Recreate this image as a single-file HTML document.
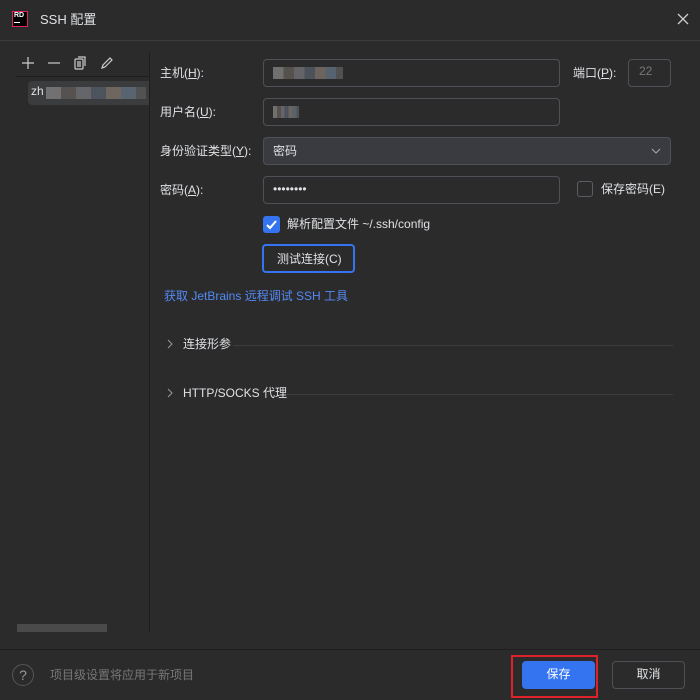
<!DOCTYPE html>
<html><head><meta charset="utf-8"><style>
*{margin:0;padding:0;box-sizing:border-box}
body{width:700px;height:700px;background:#2b2b2b;font-family:"Liberation Sans","Noto Sans CJK SC",sans-serif;font-size:12px;color:#dfe1e5;position:relative;overflow:hidden}
.a{position:absolute}
.inp{position:absolute;border:1px solid #4e5157;border-radius:4px;background:#2b2b2b;height:28px}
.lbl{position:absolute;font-size:12px;color:#dfe1e5}
.blur{position:absolute;height:12px;background:linear-gradient(90deg,#777 0 15%,#5a5551 15% 30%,#6a6a6f 30% 45%,#4f5660 45% 60%,#746a63 60% 75%,#5b6875 75% 90%,#555 90%);opacity:.9}
</style></head><body>
<div class="a" style="left:12px;top:11px;width:16px;height:16px;border:1px solid #e0245e;background:#000"></div>
<div class="a" style="left:14px;top:12px;font-size:7px;font-weight:bold;color:#fff;line-height:8px">RD</div>
<div class="a" style="left:14px;top:22px;width:6px;height:1px;background:#fff"></div>
<div class="a" style="left:40px;top:9px;font-size:13px;color:#dfe1e5">SSH 配置</div>
<svg class="a" style="left:677px;top:13px" width="12" height="12"><path d="M1 1L11 11M11 1L1 11" stroke="#ccc" stroke-width="1.3"/></svg>
<div class="a" style="left:0;top:40px;width:700px;height:1px;background:#3c3c3c"></div>
<svg class="a" style="left:20px;top:55px" width="100" height="16" fill="none" stroke="#ccc" stroke-width="1.2">
<path d="M8 2V14M2 8H14"/><path d="M28 8H40"/>
<rect x="55" y="4" width="8" height="10" rx="1"/><path d="M58 2H65V11M57 7H61M57 9H61M57 11H61"/>
<path d="M82 13L83 10L90 3L92 5L85 12Z"/>
</svg>
<div class="a" style="left:16px;top:76px;width:134px;height:1px;background:#1e1e1e"></div>
<div class="a" style="left:28px;top:81px;width:122px;height:24px;background:#3b3c3e;border-radius:4px 0 0 4px"></div>
<div class="a" style="left:31px;top:84px;color:#dfe1e5;font-size:12px">zh</div>
<div class="blur" style="left:46px;top:87px;width:100px"></div>
<div class="a" style="left:149px;top:52px;width:1px;height:580px;background:#1e1e1e"></div>
<div class="a" style="left:17px;top:624px;width:90px;height:8px;background:#4a4a4a"></div>
<div class="lbl" style="left:160px;top:64px">主机(<u>H</u>):</div>
<div class="inp" style="left:263px;top:59px;width:297px"></div>
<div class="blur" style="left:273px;top:67px;width:70px"></div>
<div class="lbl" style="left:573px;top:64px">端口(<u>P</u>):</div>
<div class="inp" style="left:628px;top:59px;width:43px;color:#777;padding:4px 0 0 10px">22</div>
<div class="lbl" style="left:160px;top:103px">用户名(<u>U</u>):</div>
<div class="inp" style="left:263px;top:98px;width:297px"></div>
<div class="blur" style="left:273px;top:106px;width:26px"></div>
<div class="lbl" style="left:160px;top:142px">身份验证类型(<u>Y</u>):</div>
<div class="inp" style="left:263px;top:137px;width:408px;background:#393b40;border-color:#4e5157;padding:4px 0 0 9px">密码</div>
<svg class="a" style="left:651px;top:148px" width="10" height="6"><path d="M1 1L5 5L9 1" stroke="#aaa" fill="none"/></svg>
<div class="lbl" style="left:160px;top:181px">密码(<u>A</u>):</div>
<div class="inp" style="left:263px;top:176px;width:297px;padding:5px 0 0 9px;font-size:12px">••••••••</div>
<div class="a" style="left:577px;top:181px;width:16px;height:16px;border:1px solid #5a5d63;border-radius:3px"></div>
<div class="lbl" style="left:601px;top:180px">保存密码(E)</div>
<div class="a" style="left:263px;top:216px;width:17px;height:17px;background:#3574f0;border-radius:3px"></div>
<svg class="a" style="left:265px;top:218px" width="13" height="13"><path d="M2 7L5 10L11 3" stroke="#fff" stroke-width="2" fill="none"/></svg>
<div class="lbl" style="left:287px;top:215px">解析配置文件 ~/.ssh/config</div>
<div class="a" style="left:262px;top:244px;width:93px;height:29px;border:2px solid #3574f0;border-radius:4px;padding:4px 0 0 13px;color:#dfe1e5">测试连接(C)</div>
<div class="a" style="left:164px;top:287px;color:#548af7">获取 JetBrains 远程调试 SSH 工具</div>
<svg class="a" style="left:167px;top:339px" width="6" height="10"><path d="M1 1L5 5L1 9" stroke="#999" fill="none"/></svg>
<div class="lbl" style="left:183px;top:335px">连接形参</div>
<div class="a" style="left:233px;top:345px;width:440px;height:1px;background:#3c3c3c"></div>
<svg class="a" style="left:167px;top:388px" width="6" height="10"><path d="M1 1L5 5L1 9" stroke="#999" fill="none"/></svg>
<div class="lbl" style="left:183px;top:384px">HTTP/SOCKS 代理</div>
<div class="a" style="left:286px;top:394px;width:387px;height:1px;background:#3c3c3c"></div>
<div class="a" style="left:0;top:649px;width:700px;height:1px;background:#1e1e1e"></div>
<div class="a" style="left:12px;top:664px;width:22px;height:22px;border:1px solid #555;border-radius:50%;color:#999;font-size:14px;text-align:center;line-height:20px">?</div>
<div class="a" style="left:50px;top:666px;color:#777">项目级设置将应用于新项目</div>
<div class="a" style="left:511px;top:655px;width:87px;height:43px;border:2px solid #e0202a"></div>
<div class="a" style="left:522px;top:661px;width:73px;height:28px;background:#3574f0;border-radius:4px;color:#fff;text-align:center;line-height:27px">保存</div>
<div class="a" style="left:612px;top:661px;width:73px;height:28px;border:1px solid #4e5157;border-radius:4px;color:#dfe1e5;text-align:center;line-height:25px">取消</div>
</body></html>
